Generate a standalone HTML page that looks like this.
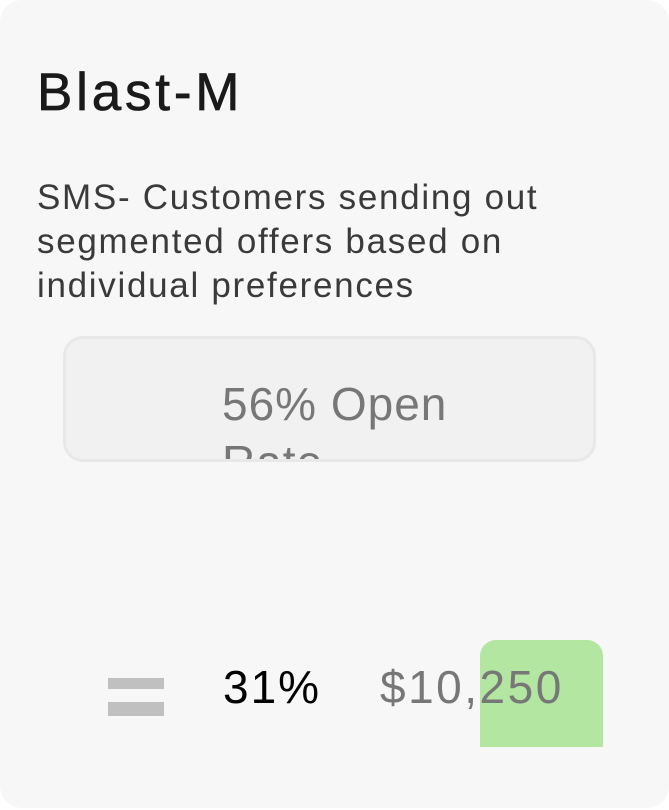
<!DOCTYPE html>
<html><head><style>
html,body{margin:0;padding:0;background:#fff;}
.card{position:absolute;left:0;top:0;width:669px;height:808px;background:#f7f7f7;border-radius:22px;overflow:hidden;font-family:"Liberation Sans",sans-serif;}
h1{position:absolute;left:37px;top:62px;margin:0;font-size:53px;font-weight:400;color:#1a1a1a;letter-spacing:3.8px;-webkit-text-stroke:0.7px #1a1a1a;}
.desc{position:absolute;left:37px;top:176px;width:560px;font-size:35px;line-height:44px;color:#3a3a3a;letter-spacing:1.7px;}
.box{position:absolute;left:63px;top:336px;width:527px;height:120px;border:3px solid #e8e8e8;border-radius:20px;background:#f1f1f1;overflow:hidden;}
.boxt{position:absolute;left:156px;top:36px;font-size:46px;line-height:58px;color:#777;width:300px;letter-spacing:1px;}
.bar{position:absolute;left:108px;width:56px;background:#c0c0c0;}
.g{position:absolute;left:480px;top:640px;width:123px;height:107px;background:#b3e6a1;border-radius:16px 16px 0 0;}
.t{position:absolute;top:658px;font-size:46px;line-height:58px;}
</style></head><body>
<div class="card">
<h1>Blast-M</h1>
<div class="desc">SMS- Customers sending out<br>segmented offers based on<br>individual preferences</div>
<div class="box"><div class="boxt">56% Open Rate</div></div>
<div class="bar" style="top:678px;height:11px"></div>
<div class="bar" style="top:702px;height:14px"></div>
<div class="g"></div>
<div class="t" style="left:223px;color:#000;letter-spacing:2px">31%</div>
<div class="t" style="left:380px;color:#777;letter-spacing:2.5px">$10,250</div>
</div>
</body></html>
